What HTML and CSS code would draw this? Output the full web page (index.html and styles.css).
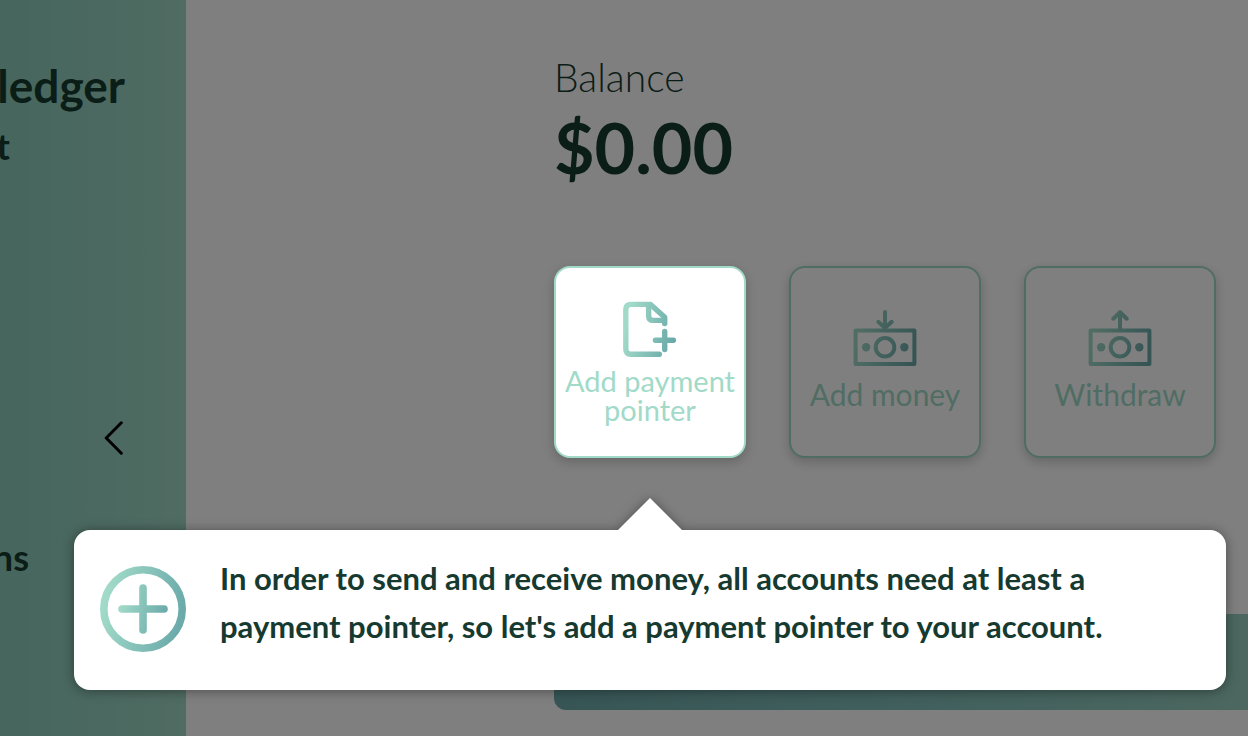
FILE: index.html
```html
<!DOCTYPE html>
<html lang="en">
<head>
<meta charset="utf-8">
<meta name="viewport" content="width=device-width, initial-scale=1">
<title>Account</title>
<link rel="stylesheet" href="styles.css">
</head>
<body>
<div class="page">
  <aside class="sidebar">
    <h1 class="brand">ledger</h1>
    <a class="nav-link nav-first" href="#">t</a>
    <button class="collapse" type="button" aria-label="Collapse menu">
      <svg width="20" height="34" viewBox="0 0 20 34" fill="none" stroke="#000" stroke-width="3" stroke-linecap="round" stroke-linejoin="round"><path d="M17.3 1.8 2.2 17l15.1 15.2"/></svg>
    </button>
    <a class="nav-link nav-second" href="#">ns</a>
  </aside>

  <main class="content">
    <p class="label">Balance</p>
    <p class="amount">$0.00</p>

    <div class="actions">
      <button class="card card-active" type="button">
        <svg width="56" height="57" viewBox="622 301 56 57" fill="none" stroke="url(#gDoc)" stroke-width="5.4" stroke-linecap="round" stroke-linejoin="round">
          <defs><linearGradient id="gDoc" gradientUnits="userSpaceOnUse" x1="626" y1="325" x2="674" y2="337"><stop offset="0" stop-color="#a1dac8"/><stop offset="1" stop-color="#6baaaa"/></linearGradient></defs>
          <path d="M659.3 354.2H631q-5.2 0-5.2-5.2V309.6q0-5.2 5.2-5.2H650.5L664.7 317.3V323.6"/>
          <path d="M648.6 305V316q0 4.4 4.400 4.400H664"/>
          <path d="M664.7 331.4V349.6M655.4 340.3H673.4"/>
        </svg>
        <span>Add payment pointer</span>
      </button>
      <button class="card" type="button">
        <svg width="66" height="56" viewBox="0 0 66 56" fill="none" stroke="url(#gCash)" stroke-width="4" stroke-linecap="round" stroke-linejoin="round">
          <defs><linearGradient id="gCash" gradientUnits="userSpaceOnUse" x1="6" y1="24" x2="62" y2="38"><stop offset="0" stop-color="#a1dac8"/><stop offset="1" stop-color="#6baaaa"/></linearGradient></defs>
          <rect x="3.6" y="20.4" width="58.8" height="33.5"/>
          <circle cx="33" cy="37.3" r="9.3"/>
          <g fill="url(#gCash)" stroke="none"><circle cx="14.1" cy="37.3" r="4.2"/><circle cx="52.3" cy="37.3" r="4.2"/></g>
          <path d="M33 18V2.1M26.3 11.8 33 18l6.7-6.200"/>
        </svg>
        <span>Add money</span>
      </button>
      <button class="card" type="button">
        <svg width="66" height="56" viewBox="0 0 66 56" fill="none" stroke="url(#gCash)" stroke-width="4" stroke-linecap="round" stroke-linejoin="round">
          <rect x="3.6" y="20.4" width="58.8" height="33.5"/>
          <circle cx="33" cy="37.3" r="9.3"/>
          <g fill="url(#gCash)" stroke="none"><circle cx="14.1" cy="37.3" r="4.2"/><circle cx="52.3" cy="37.3" r="4.2"/></g>
          <path d="M33 20V2.2M26.3 8.700 33 2.2l6.7 6.5"/>
        </svg>
        <span>Withdraw</span>
      </button>
    </div>

    <div class="banner"></div>
  </main>

  <div class="overlay"></div>

  <div class="tip" role="dialog" aria-labelledby="tip-text">
    <svg class="tip-icon" width="86" height="86" viewBox="0 0 86 86" fill="none" stroke-width="7.6" stroke-linecap="round">
      <defs>
        <linearGradient id="gRing" gradientUnits="userSpaceOnUse" x1="4" y1="34" x2="82" y2="52"><stop offset="0" stop-color="#a1dac8"/><stop offset="1" stop-color="#6baaaa"/></linearGradient>
        <linearGradient id="gPlus" gradientUnits="userSpaceOnUse" x1="20" y1="38" x2="66" y2="48"><stop offset="0" stop-color="#a1dac8"/><stop offset="1" stop-color="#6baaaa"/></linearGradient>
      </defs>
      <circle cx="43" cy="43" r="39.2" stroke="url(#gRing)"/>
      <path d="M43 22V64M22 43H64" stroke="url(#gPlus)"/>
    </svg>
    <p class="tip-text" id="tip-text">In order to send and receive money, all accounts need at least a<br>payment pointer, so let's add a payment pointer to your account.</p>
  </div>
</div>
</body>
</html>
```
FILE: styles.css
```css
* {
  box-sizing: border-box;
}

body {
  margin: 0;
  background: #fff;
  color: #163a2f;
  font-family: Lato, "Open Sans", sans-serif;
}

h1,
p {
  margin: 0;
}

button {
  font: inherit;
  color: inherit;
  padding: 0;
  cursor: pointer;
}

svg {
  display: block;
  flex: none;
}

.page {
  position: relative;
  display: flex;
  min-height: 100vh;
  overflow: hidden;
}

.sidebar {
  flex: none;
  display: flex;
  flex-direction: column;
  align-items: flex-end;
  width: 186px;
  padding-top: 56px;
  overflow: hidden;
  background: linear-gradient(90deg, #8cccbc, #a0d8c6);
}

.brand {
  padding-right: 61px;
  font-size: 46px;
  font-weight: 700;
  line-height: 60px;
}

.nav-link {
  color: inherit;
  font-size: 36px;
  font-weight: 700;
  line-height: 48px;
  text-decoration: none;
}

.nav-first {
  margin-top: 6px;
  padding-right: 176px;
}

.nav-second {
  margin-top: 78px;
  padding-right: 157px;
}

.collapse {
  margin: 251px 62px 0 0;
  border: 0;
  background: none;
}

.content {
  flex: 1;
  min-width: 0;
  padding: 53px 0 26px 368px;
}

.label {
  font-size: 39px;
  font-weight: 300;
  line-height: 48px;
}

.amount {
  font-size: 70px;
  font-weight: 700;
  line-height: 92px;
}

.actions {
  display: flex;
  gap: 43px;
  margin-top: 73px;
}

.card {
  flex: none;
  display: flex;
  flex-direction: column;
  align-items: center;
  justify-content: center;
  gap: 12px;
  width: 192px;
  height: 192px;
  padding-bottom: 4px;
  border: 2px solid #a1dac8;
  border-radius: 16px;
  background: #fff;
  box-shadow: 0 4px 12px rgba(0, 0, 0, 0.2);
  color: #a1dac8;
  font-size: 30px;
  line-height: 32px;
}

.card-active {
  position: relative;
  z-index: 2;
  gap: 8px;
  padding-bottom: 0;
  font-size: 29px;
  line-height: 29px;
}

.banner {
  height: 96px;
  margin-top: 156px;
  border-radius: 12px 0 0 12px;
  background: linear-gradient(90deg, #6eaaaa, #7fbdb9 45%, #98cfc0);
}

.overlay {
  position: absolute;
  inset: 0;
  z-index: 1;
  background: rgba(0, 0, 0, 0.5);
}

.tip {
  position: absolute;
  top: 530px;
  right: 22px;
  left: 74px;
  z-index: 3;
  display: flex;
  gap: 34px;
  min-height: 160px;
  padding: 24px 26px;
  border-radius: 16px;
  background: #fff;
  filter: drop-shadow(0 1px 6px rgba(0, 0, 0, 0.4));
}

.tip::before {
  content: "";
  position: absolute;
  bottom: 100%;
  left: 544px;
  border: 32px solid transparent;
  border-top: 0;
  border-bottom-color: #fff;
}

.tip-icon {
  margin-top: 12px;
}

.tip-text {
  font-size: 31px;
  font-weight: 700;
  line-height: 48px;
}
```
